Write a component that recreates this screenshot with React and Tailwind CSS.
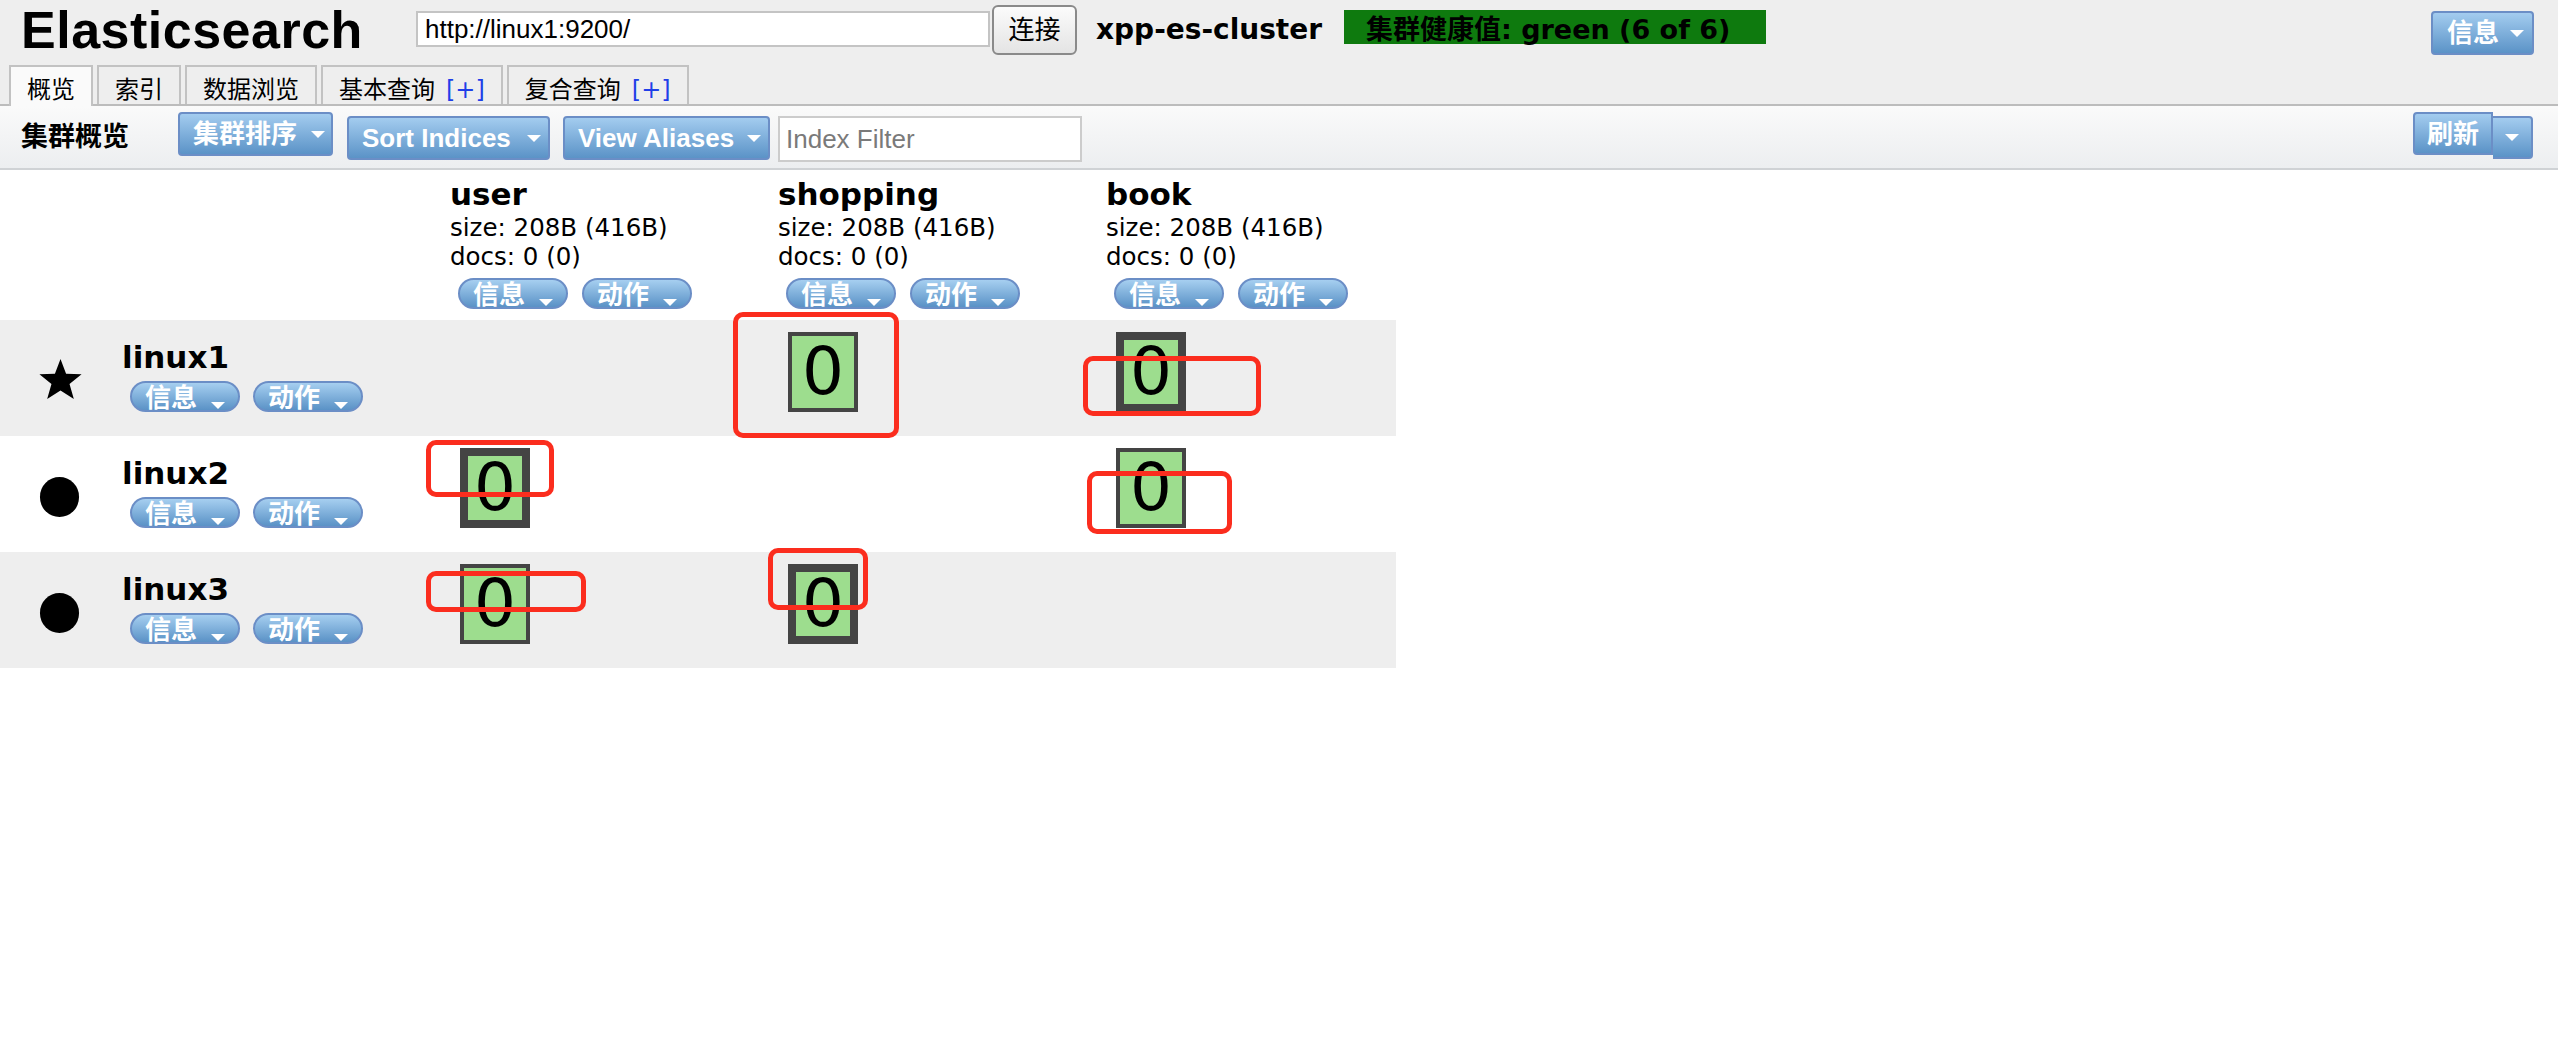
import React from "react";

const indices = [
  { name: "user", width: "w-[328px]" },
  { name: "shopping", width: "w-[328px]" },
  { name: "book", width: "w-[290px]" },
];

// shard type per index column: "p" primary, "r" replica, null none
const nodes = [
  { name: "linux1", master: true, shards: [null, "r", "p"] },
  { name: "linux2", master: false, shards: ["p", null, "r"] },
  { name: "linux3", master: false, shards: ["r", "p", null] },
];

// red annotation boxes drawn over the screenshot
const marks = [
  "left-[733px] top-[312px] w-[166px] h-[126px]",
  "left-[1083px] top-[356px] w-[178px] h-[60px]",
  "left-[426px] top-[440px] w-[128px] h-[57px]",
  "left-[1087px] top-[471px] w-[145px] h-[63px]",
  "left-[426px] top-[571px] w-[160px] h-[41px]",
  "left-[768px] top-[548px] w-[100px] h-[62px]",
];

const Caret = ({ className = "" }) => (
  <svg width="14" height="7" viewBox="0 0 14 7" className={`shrink-0 ${className}`}>
    <polygon points="0,0 14,0 7,7" fill="white" />
  </svg>
);

const BlueButton = ({ label, className = "" }) => (
  <div
    className={`flex h-[44px] items-center justify-between rounded-[4px] border-2 border-[#6b8ec6] bg-linear-to-b from-[#a3ccef] to-[#5b93c7] font-['Liberation_Sans','Noto_Sans_CJK_SC',sans-serif] text-[26px] font-bold leading-none text-white ${className}`}
  >
    <span>{label}</span>
    <Caret />
  </div>
);

const Pill = ({ label }) => (
  <div className="flex h-[31px] w-[110px] items-start justify-between overflow-hidden rounded-full border-2 border-[#6b8ec6] bg-linear-to-b from-[#a6cff0] to-[#5a92c6] pl-[13px] pr-[13px] pt-[2px] font-['Liberation_Sans','Noto_Sans_CJK_SC',sans-serif] text-[26px] font-bold leading-none text-white">
    <span>{label}</span>
    <Caret className="mt-[17px]" />
  </div>
);

const Star = () => (
  <svg width="43" height="41" viewBox="0 0 100 95">
    <polygon
      points="50,0 63,34 99,35 71,58 81,93 50,73 19,93 29,58 1,35 37,34"
      fill="black"
    />
  </svg>
);

const Shard = ({ type }) => (
  <div
    className={`ml-[10px] mt-[12px] flex h-[80px] w-[70px] items-center justify-center border-[#444444] bg-[#9ddd8e] text-[66px] leading-none text-black ${
      type === "p" ? "border-[8px]" : "border-[4px]"
    }`}
  >
    0
  </div>
);

const Tab = ({ label, plus, active }) => (
  <div
    className={`flex items-start border-x-2 border-t-2 border-[#c2c2c2] px-[16px] pt-[11px] font-['DejaVu_Sans','Noto_Sans_CJK_SC',sans-serif] text-[24px] leading-none ${
      active ? "-mb-[2px] h-[41px] bg-[#fafafa]" : "h-[39px] bg-[#eeeeee]"
    }`}
  >
    <span>{label}</span>
    {plus && <span className="ml-[11px] text-[#1f3fe8]">[+]</span>}
  </div>
);

export default function App() {
  return (
    <div className="relative min-h-screen w-full bg-white font-['DejaVu_Sans','Noto_Sans_CJK_SC',sans-serif] text-black">
      {/* Header */}
      <div className="bg-[#eeeeee]">
        <div className="flex h-[64px] items-start pl-[21px] pr-[24px]">
          <h1 className="mt-[4px] w-[395px] font-['Liberation_Sans',sans-serif] text-[52px] font-bold leading-none tracking-[0.5px]">
            Elasticsearch
          </h1>
          <input
            readOnly
            value="http://linux1:9200/"
            className="mt-[11px] h-[36px] w-[574px] border-2 border-[#c4c4c4] bg-white pl-[7px] font-['Liberation_Sans',sans-serif] text-[26px] outline-none"
          />
          <button className="ml-[2px] mt-[5px] h-[50px] w-[85px] rounded-[6px] border-2 border-[#8a8a8a] bg-linear-to-b from-[#fbfbfb] to-[#e4e4e4] font-['Liberation_Sans','Noto_Sans_CJK_SC',sans-serif] text-[26px] leading-none">
            连接
          </button>
          <span className="ml-[19px] mt-[16px] w-[248px] text-[28px] font-bold leading-none">
            xpp-es-cluster
          </span>
          <div className="mt-[10px] h-[34px] w-[422px] bg-[#0e7a0e] pl-[22px] pt-[6px] text-[27px] font-bold leading-none">
            集群健康值: green (6 of 6)
          </div>
          <BlueButton label="信息" className="ml-auto mt-[11px] h-[41px] w-[103px] pl-[14px] pr-[8px]" />
        </div>

        {/* Tabs */}
        <div className="flex h-[42px] items-end gap-[4px] border-b-2 border-[#bcbcbc] pl-[9px]">
          <Tab label="概览" active />
          <Tab label="索引" />
          <Tab label="数据浏览" />
          <Tab label="基本查询" plus />
          <Tab label="复合查询" plus />
        </div>
      </div>

      {/* Toolbar */}
      <div className="flex h-[64px] items-start border-b-2 border-[#cfd2d5] bg-linear-to-b from-[#fafafa] to-[#eceef0] pl-[21px] pr-[25px]">
        <span className="mt-[17px] w-[157px] text-[27px] font-bold leading-none">集群概览</span>
        <BlueButton label="集群排序" className="mt-[6px] w-[155px] pl-[13px] pr-[6px]" />
        <BlueButton label="Sort Indices" className="ml-[14px] mt-[10px] w-[203px] pl-[13px] pr-[7px]" />
        <BlueButton label="View Aliases" className="ml-[13px] mt-[10px] w-[207px] pl-[13px] pr-[7px]" />
        <input
          placeholder="Index Filter"
          className="ml-[8px] mt-[10px] h-[46px] w-[304px] border-2 border-[#cccccc] bg-white pl-[6px] font-['Liberation_Sans',sans-serif] text-[26px] outline-none placeholder:text-[#7a7a7a]"
        />
        <div className="ml-auto flex items-start">
          <div className="mt-[6px] flex h-[43px] w-[80px] items-center justify-center rounded-l-[4px] border-2 border-[#6b8ec6] bg-linear-to-b from-[#a3ccef] to-[#5b93c7] font-['Liberation_Sans','Noto_Sans_CJK_SC',sans-serif] text-[26px] font-bold leading-none text-white">
            刷新
          </div>
          <div className="mt-[10px] flex h-[43px] w-[40px] items-center justify-center rounded-r-[4px] border-2 border-l-0 border-[#6b8ec6] bg-linear-to-b from-[#a3ccef] to-[#5b93c7]">
            <Caret />
          </div>
        </div>
      </div>

      {/* Cluster overview */}
      <div className="w-[1396px]">
        <div className="flex h-[150px]">
          <div className="w-[450px]" />
          {indices.map((ix) => (
            <div key={ix.name} className={`${ix.width} pt-[6px]`}>
              <div className="text-[31px] font-bold leading-[37px]">{ix.name}</div>
              <div className="text-[24.5px] leading-[29px]">size: 208B (416B)</div>
              <div className="text-[24.5px] leading-[29px]">docs: 0 (0)</div>
              <div className="ml-[8px] mt-[7px] flex gap-[14px]">
                <Pill label="信息" />
                <Pill label="动作" />
              </div>
            </div>
          ))}
        </div>

        {nodes.map((node, i) => (
          <div
            key={node.name}
            className={`flex h-[116px] ${i % 2 === 0 ? "bg-[#eeeeee]" : "bg-white"}`}
          >
            <div className="flex w-[450px]">
              <div className="w-[122px] pl-[39px]">
                {node.master ? (
                  <div className="mt-[39px]">
                    <Star />
                  </div>
                ) : (
                  <div className="ml-[1px] mt-[41px] h-[40px] w-[39px] rounded-full bg-black" />
                )}
              </div>
              <div className="pt-[19px]">
                <div className="text-[31px] font-bold leading-[37px]">{node.name}</div>
                <div className="ml-[8px] mt-[5px] flex gap-[13px]">
                  <Pill label="信息" />
                  <Pill label="动作" />
                </div>
              </div>
            </div>
            {indices.map((ix, c) => (
              <div key={ix.name} className={ix.width}>
                {node.shards[c] && <Shard type={node.shards[c]} />}
              </div>
            ))}
          </div>
        ))}
      </div>

      {marks.map((m) => (
        <div
          key={m}
          className={`pointer-events-none absolute rounded-[10px] border-[5px] border-[#fb2d1e] ${m}`}
        />
      ))}
    </div>
  );
}
